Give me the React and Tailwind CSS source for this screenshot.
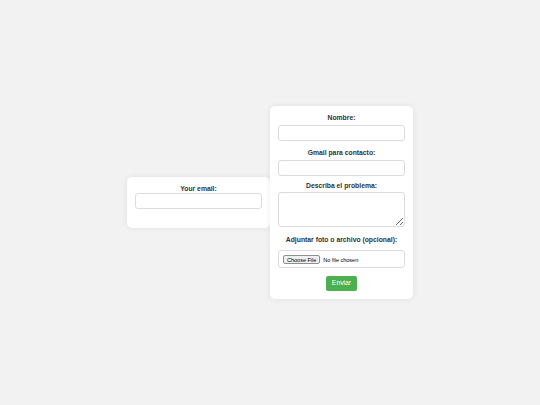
import React from "react";

const labelCls = "block text-center font-bold text-[#333] text-[6.8px] leading-[8px]";
const fieldCls = "block w-full border border-[#dcdcdc] rounded-[3px] bg-white";

const App = () => {
  return (
    <div className="w-full h-screen bg-[#f2f2f2] flex items-center justify-center font-['Liberation_Sans',Arial,sans-serif]">
      {/* Email card */}
      <div className="w-[143px] bg-white rounded-[5px] shadow-[0_0_6px_rgba(0,0,0,0.08)] px-2 pt-2 pb-[19px]">
        <label className={labelCls}>Your email:</label>
        <input type="email" className={`${fieldCls} h-[16px] mt-[0.5px]`} />
      </div>

      {/* Contact card */}
      <form className="w-[143px] bg-white rounded-[5px] shadow-[0_0_6px_rgba(0,0,0,0.08)] px-2 pt-[7.5px] pb-2">
        <label className={`${labelCls} mb-[3.5px]`}>Nombre:</label>
        <input type="text" className={`${fieldCls} h-[16px] mb-[7.5px]`} />

        <label className={`${labelCls} mb-[3px]`}>Gmail para contacto:</label>
        <input type="email" className={`${fieldCls} h-[16px] mb-[6.5px]`} />

        <label className={`${labelCls} mb-[2px]`}>Describa el problema:</label>
        <textarea className={`${fieldCls} h-[35px] mb-[8.5px] resize-y`} />

        <label className={`${labelCls} mb-[6.5px]`}>Adjuntar foto o archivo (opcional):</label>
        <input
          type="file"
          className={`${fieldCls} h-[18px] px-[4px] py-[4px] text-[5.5px] leading-[8px] text-black mb-2 file:bg-[#efefef] file:border file:border-[#8f8f8f] file:rounded-[2px] file:px-[3px] file:h-[9px] file:mr-[3px] file:text-black`}
        />

        <div className="flex justify-center">
          <button
            type="button"
            className="bg-[#4caf50] text-white text-[6.8px] h-[15px] px-[6px] rounded-[2px]"
          >
            Enviar
          </button>
        </div>
      </form>
    </div>
  );
};

export default App;
